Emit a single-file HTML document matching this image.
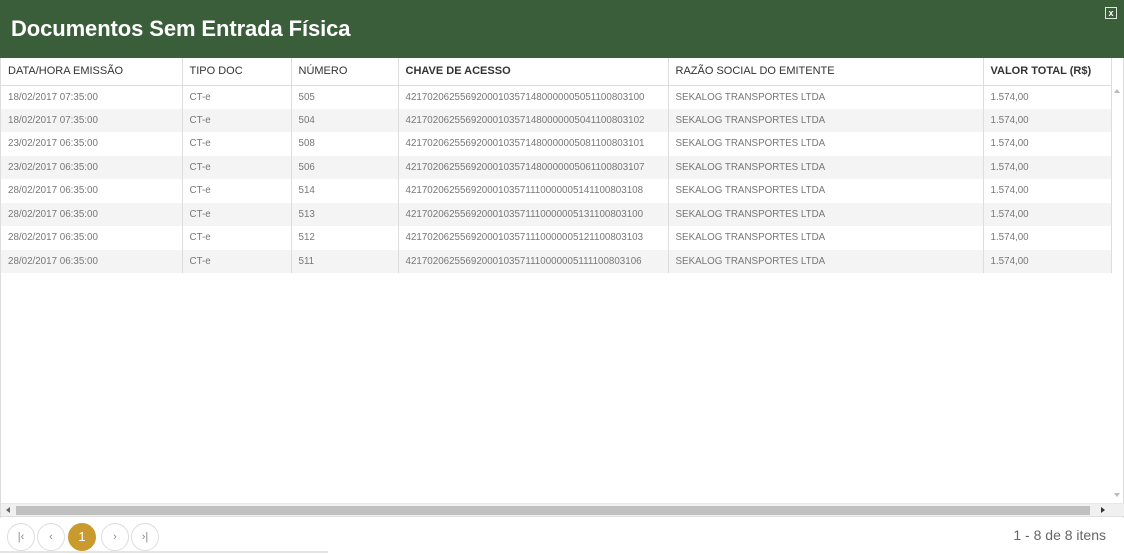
<!DOCTYPE html>
<html><head><meta charset="utf-8"><style>
*{box-sizing:border-box;margin:0;padding:0}
body{width:1124px;height:554px;overflow:hidden;background:#fff;font-family:"Liberation Sans","DejaVu Sans",sans-serif;position:relative}
.top{position:absolute;left:0;top:0;width:1124px;height:58px;background:#3a5e3a}
.top h1{position:absolute;left:11px;top:16px;color:#fff;font-size:22px;font-weight:bold;letter-spacing:-0.1px}
.close{position:absolute;left:1105px;top:7px;width:12px;height:12px;border:1px solid #dfe8df;color:#fff;font-size:9px;line-height:10px;text-align:center;font-weight:bold}
.grid{position:absolute;left:0;top:58px;width:1124px;height:460px;border-left:1px solid #ddd;border-right:1px solid #ddd}
table{border-collapse:collapse;table-layout:fixed;position:absolute;left:0;top:0;width:1110px}
th{height:27px;font-size:11px;font-weight:normal;color:#333;text-align:left;padding-left:7px;border-right:1px solid #ddd;border-bottom:1px solid #ddd;white-space:nowrap}
th.b{font-weight:bold}
td{height:23.5px;font-size:9.8px;color:#777;padding-left:7px;border-right:1px solid #ddd;white-space:nowrap}
tr.alt td{background:#f4f4f4}
.vs{position:absolute;left:1110px;top:27px;width:13px;height:420px}
.hs{position:absolute;left:0;top:445px;width:1124px;height:14px;background:#f0f0f0;border-top:1px solid #e8e8e8;border-bottom:1px solid #e0e0e0}
.thumb{position:absolute;left:15px;top:2px;width:1074px;height:9px;background:#c0c0c0}
.pg{position:absolute;top:523px;width:28px;height:28px;border:1px solid #ddd;border-radius:50%;text-align:center;line-height:26px;font-size:11px;color:#888}
.pg.on{background:#c99a2e;border-color:#c99a2e;color:#fff;font-size:13px}
.info{position:absolute;right:18px;top:527px;font-size:14px;color:#666}
</style></head><body>
<div class="top"><h1>Documentos Sem Entrada Física</h1><div class="close">x</div></div>
<div class="grid">
<table>
<colgroup><col style="width:181px"><col style="width:109px"><col style="width:107px"><col style="width:270px"><col style="width:315px"><col style="width:128px"></colgroup>
<tr><th>DATA/HORA EMISSÃO</th><th>TIPO DOC</th><th>NÚMERO</th><th class="b">CHAVE DE ACESSO</th><th>RAZÃO SOCIAL DO EMITENTE</th><th class="b">VALOR TOTAL (R$)</th></tr>
<tr><td>18/02/2017 07:35:00</td><td>CT-e</td><td>505</td><td>42170206255692000103571480000005051100803100</td><td>SEKALOG TRANSPORTES LTDA</td><td>1.574,00</td></tr>
<tr class="alt"><td>18/02/2017 07:35:00</td><td>CT-e</td><td>504</td><td>42170206255692000103571480000005041100803102</td><td>SEKALOG TRANSPORTES LTDA</td><td>1.574,00</td></tr>
<tr><td>23/02/2017 06:35:00</td><td>CT-e</td><td>508</td><td>42170206255692000103571480000005081100803101</td><td>SEKALOG TRANSPORTES LTDA</td><td>1.574,00</td></tr>
<tr class="alt"><td>23/02/2017 06:35:00</td><td>CT-e</td><td>506</td><td>42170206255692000103571480000005061100803107</td><td>SEKALOG TRANSPORTES LTDA</td><td>1.574,00</td></tr>
<tr><td>28/02/2017 06:35:00</td><td>CT-e</td><td>514</td><td>42170206255692000103571110000005141100803108</td><td>SEKALOG TRANSPORTES LTDA</td><td>1.574,00</td></tr>
<tr class="alt"><td>28/02/2017 06:35:00</td><td>CT-e</td><td>513</td><td>42170206255692000103571110000005131100803100</td><td>SEKALOG TRANSPORTES LTDA</td><td>1.574,00</td></tr>
<tr><td>28/02/2017 06:35:00</td><td>CT-e</td><td>512</td><td>42170206255692000103571110000005121100803103</td><td>SEKALOG TRANSPORTES LTDA</td><td>1.574,00</td></tr>
<tr class="alt"><td>28/02/2017 06:35:00</td><td>CT-e</td><td>511</td><td>42170206255692000103571110000005111100803106</td><td>SEKALOG TRANSPORTES LTDA</td><td>1.574,00</td></tr>
</table>
<div class="vs"><div style="position:absolute;left:3px;top:4px;border:3.5px solid transparent;border-bottom:4px solid #bbb;border-top:0"></div><div style="position:absolute;left:3px;top:408px;border:3.5px solid transparent;border-top:4px solid #bbb;border-bottom:0"></div></div>
<div class="hs"><div style="position:absolute;left:5px;top:3px;border:3.5px solid transparent;border-right:4px solid #666;border-left:0"></div><div class="thumb"></div><div style="position:absolute;left:1100px;top:3px;border:3.5px solid transparent;border-left:4px solid #333;border-right:0"></div></div>
</div>
<div class="pg" style="left:7px">|‹</div>
<div class="pg" style="left:37px">‹</div>
<div class="pg on" style="left:68px">1</div>
<div class="pg" style="left:101px">›</div>
<div class="pg" style="left:131px">›|</div>
<div style="position:absolute;left:0;top:551px;width:328px;height:2px;background:#e4e4e4"></div>
<div class="info">1 - 8 de 8 itens</div>
</body></html>
